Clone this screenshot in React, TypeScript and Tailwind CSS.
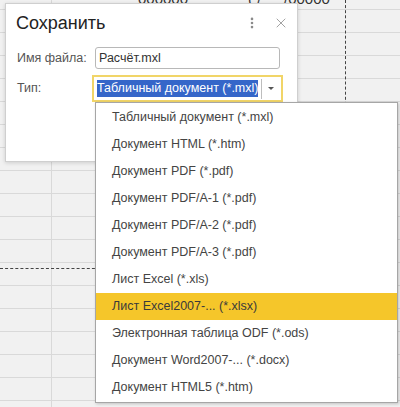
import { EllipsisVertical, X } from 'lucide-react'

const fileTypes = [
  'Табличный документ (*.mxl)',
  'Документ HTML (*.htm)',
  'Документ PDF (*.pdf)',
  'Документ PDF/A-1 (*.pdf)',
  'Документ PDF/A-2 (*.pdf)',
  'Документ PDF/A-3 (*.pdf)',
  'Лист Excel (*.xls)',
  'Лист Excel2007-... (*.xlsx)',
  'Электронная таблица ODF (*.ods)',
  'Документ Word2007-... (*.docx)',
  'Документ HTML5 (*.htm)',
]

const activeIndex = 7

/**
 * Spreadsheet grid behind the dialog.
 */
function SheetGrid() {
  const rows = Array.from({ length: 18 })
  return (
    <div className="flex flex-col">
      <div className="h-[10px] border-b border-[#d9d9d9] flex">
        <div className="w-[52px] border-r border-[#d9d9d9]" />
      </div>
      {rows.map((_, i) => (
        <div key={i} className="h-[23px] border-b border-[#d9d9d9] flex">
          <div className="w-[52px] border-r border-[#d9d9d9]" />
        </div>
      ))}
    </div>
  )
}

export default function App() {
  return (
    <div
      className="relative w-[400px] h-[407px] overflow-hidden bg-[#f1f1f1] text-[12.5px]"
      style={{ fontFamily: '"Liberation Sans", Arial, sans-serif' }}
    >
      <SheetGrid />

      {/* cropped cell text at the top */}
      <div className="absolute top-[-9px] left-[138px] text-[15px] leading-[15px] text-[#333]">
        000000
      </div>
      <div className="absolute top-[-9px] left-[248px] text-[15px] leading-[15px] text-[#333]">
        ( /
      </div>
      <div className="absolute top-[-9px] left-[284px] text-[15px] leading-[15px] text-[#333]">
        /00000
      </div>

      {/* page break lines */}
      <div className="absolute left-[345px] top-0 h-[110px] border-l border-dashed border-[#444]" />
      <div className="absolute left-0 top-[268px] w-[100px] border-t border-dashed border-[#444]" />

      {/* Dialog */}
      <div className="absolute left-[5px] top-[3px] w-[293px] h-[159px] bg-white border border-[#cfcfcf] shadow-[0_1px_4px_rgba(0,0,0,0.15)]">
        <div className="flex items-center h-[36px] pl-[10px] pr-[8px] mt-[1px]">
          <span className="text-[18px] text-[#222] leading-none">Сохранить</span>
          <div className="ml-auto flex items-center gap-[14px] text-[#8a8a8a]">
            <EllipsisVertical className="w-[14px] h-[14px]" strokeWidth={2.5} />
            <X className="w-[16px] h-[16px]" strokeWidth={1.2} />
          </div>
        </div>

        <div className="flex items-center mt-[6px] h-[22px]">
          <span className="w-[89px] pl-[11px] text-[#555]">Имя файла:</span>
          <div className="w-[185px] h-[22px] border border-[#b8b8b8] rounded-[3px] flex items-center pl-[3px] text-[#333]">
            Расчёт.mxl
          </div>
        </div>

        <div className="flex items-center mt-[6px] h-[27px]">
          <span className="w-[86px] pl-[11px] text-[#555]">Тип:</span>
          <div className="w-[191px] h-[27px] border-2 border-[#f1d568] flex items-center pl-[3px] pr-[2px]">
            <span className="bg-[#3566c9] text-white h-[17px] leading-[17px] whitespace-nowrap">
              Табличный документ (*.mxl)
            </span>
            <div className="ml-[3px] h-[20px] border-l border-[#bdbdbd]" />
            <div className="flex-1 flex justify-center">
              <div className="w-0 h-0 border-l-[3px] border-r-[3px] border-t-[3px] border-l-transparent border-r-transparent border-t-[#555]" />
            </div>
          </div>
        </div>
      </div>

      {/* Dropdown list */}
      <div className="absolute left-[95px] top-[102px] w-[303px] h-[301px] bg-white border border-[#a6a6a6] shadow-[1px_1px_3px_rgba(0,0,0,0.2)] pt-[1px]">
        {fileTypes.map((label, i) => (
          <div
            key={label}
            className={
              i === activeIndex
                ? 'h-[27px] flex items-center pl-[16px] bg-[#f5c62a] text-[#3a3a3a]'
                : 'h-[27px] flex items-center pl-[16px] text-[#444]'
            }
          >
            {label}
          </div>
        ))}
      </div>
    </div>
  )
}
